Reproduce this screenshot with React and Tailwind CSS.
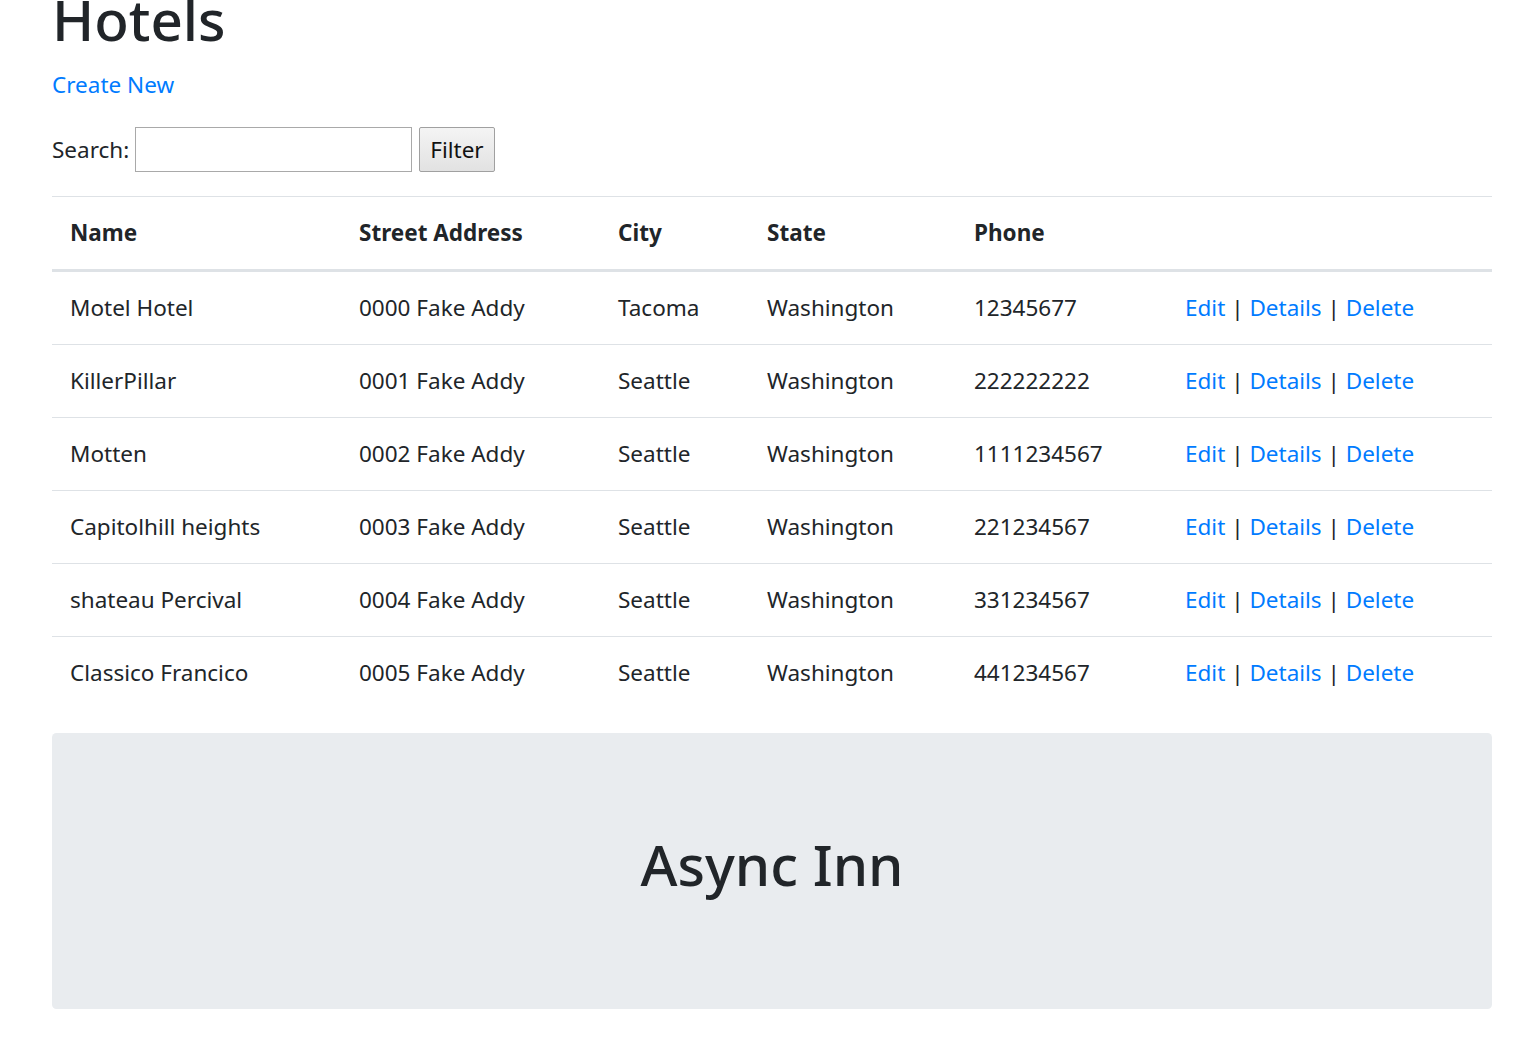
import React, { useState } from "react";

const hotels = [
  { name: "Motel Hotel", street: "0000 Fake Addy", city: "Tacoma", state: "Washington", phone: "12345677" },
  { name: "KillerPillar", street: "0001 Fake Addy", city: "Seattle", state: "Washington", phone: "222222222" },
  { name: "Motten", street: "0002 Fake Addy", city: "Seattle", state: "Washington", phone: "1111234567" },
  { name: "Capitolhill heights", street: "0003 Fake Addy", city: "Seattle", state: "Washington", phone: "221234567" },
  { name: "shateau Percival", street: "0004 Fake Addy", city: "Seattle", state: "Washington", phone: "331234567" },
  { name: "Classico Francico", street: "0005 Fake Addy", city: "Seattle", state: "Washington", phone: "441234567" },
];

const App = () => {
  const [search, setSearch] = useState("");

  return (
    <div className="min-h-screen bg-white overflow-hidden text-[#212529] text-[22.5px] leading-[36px] font-['Noto_Sans',sans-serif]">
      <div className="w-[1440px] ml-[52px]">
        <h1 className="mt-[-16px] mb-[11px] text-[56.5px] leading-[72px] font-medium">Hotels</h1>

        <p className="mb-[24px]">
          <a href="#" className="text-[#007bff]">Create New</a>
        </p>

        <form className="flex items-center mb-[24px]" onSubmit={(e) => e.preventDefault()}>
          <label>Search:</label>
          <input
            type="text"
            value={search}
            onChange={(e) => setSearch(e.target.value)}
            className="ml-[6px] w-[277px] h-[45px] border-[1.5px] border-[#a9a9a9] bg-white px-[3px]"
          />
          <button
            type="submit"
            className="ml-[7px] h-[45px] px-[10px] border-[1.5px] border-[#a0a0a0] rounded-[2px] bg-gradient-to-b from-[#f4f4f4] to-[#e2e2e2] text-[#111]"
          >
            Filter
          </button>
        </form>

        {/* hotel list */}
        <table className="w-full mb-[24px] text-left">
          <thead>
            <tr>
              <th className="w-[289px] px-[18px] py-[18px] border-t border-b-[3px] border-[#dee2e6] font-bold">Name</th>
              <th className="w-[259px] px-[18px] py-[18px] border-t border-b-[3px] border-[#dee2e6] font-bold">Street Address</th>
              <th className="w-[149px] px-[18px] py-[18px] border-t border-b-[3px] border-[#dee2e6] font-bold">City</th>
              <th className="w-[207px] px-[18px] py-[18px] border-t border-b-[3px] border-[#dee2e6] font-bold">State</th>
              <th className="w-[211px] px-[18px] py-[18px] border-t border-b-[3px] border-[#dee2e6] font-bold">Phone</th>
              <th className="px-[18px] py-[18px] border-t border-b-[3px] border-[#dee2e6]"></th>
            </tr>
          </thead>
          <tbody>
            {hotels.map((h, i) => (
              <tr key={h.name}>
                <td className={"px-[18px] py-[18px] border-[#dee2e6] " + (i > 0 ? "border-t" : "")}>{h.name}</td>
                <td className={"px-[18px] py-[18px] border-[#dee2e6] " + (i > 0 ? "border-t" : "")}>{h.street}</td>
                <td className={"px-[18px] py-[18px] border-[#dee2e6] " + (i > 0 ? "border-t" : "")}>{h.city}</td>
                <td className={"px-[18px] py-[18px] border-[#dee2e6] " + (i > 0 ? "border-t" : "")}>{h.state}</td>
                <td className={"px-[18px] py-[18px] border-[#dee2e6] " + (i > 0 ? "border-t" : "")}>{h.phone}</td>
                <td className={"px-[18px] py-[18px] border-[#dee2e6] whitespace-nowrap " + (i > 0 ? "border-t" : "")}>
                  <a href="#" className="text-[#007bff]">Edit</a> |{" "}
                  <a href="#" className="text-[#007bff]">Details</a> |{" "}
                  <a href="#" className="text-[#007bff]">Delete</a>
                </td>
              </tr>
            ))}
          </tbody>
        </table>

        <div className="bg-[#e9ecef] rounded-[4.5px] px-[48px] py-[96px] text-center">
          <h1 className="mb-[12px] text-[56.5px] leading-[72px] font-medium">Async Inn</h1>
        </div>
      </div>
    </div>
  );
};

export default App;
